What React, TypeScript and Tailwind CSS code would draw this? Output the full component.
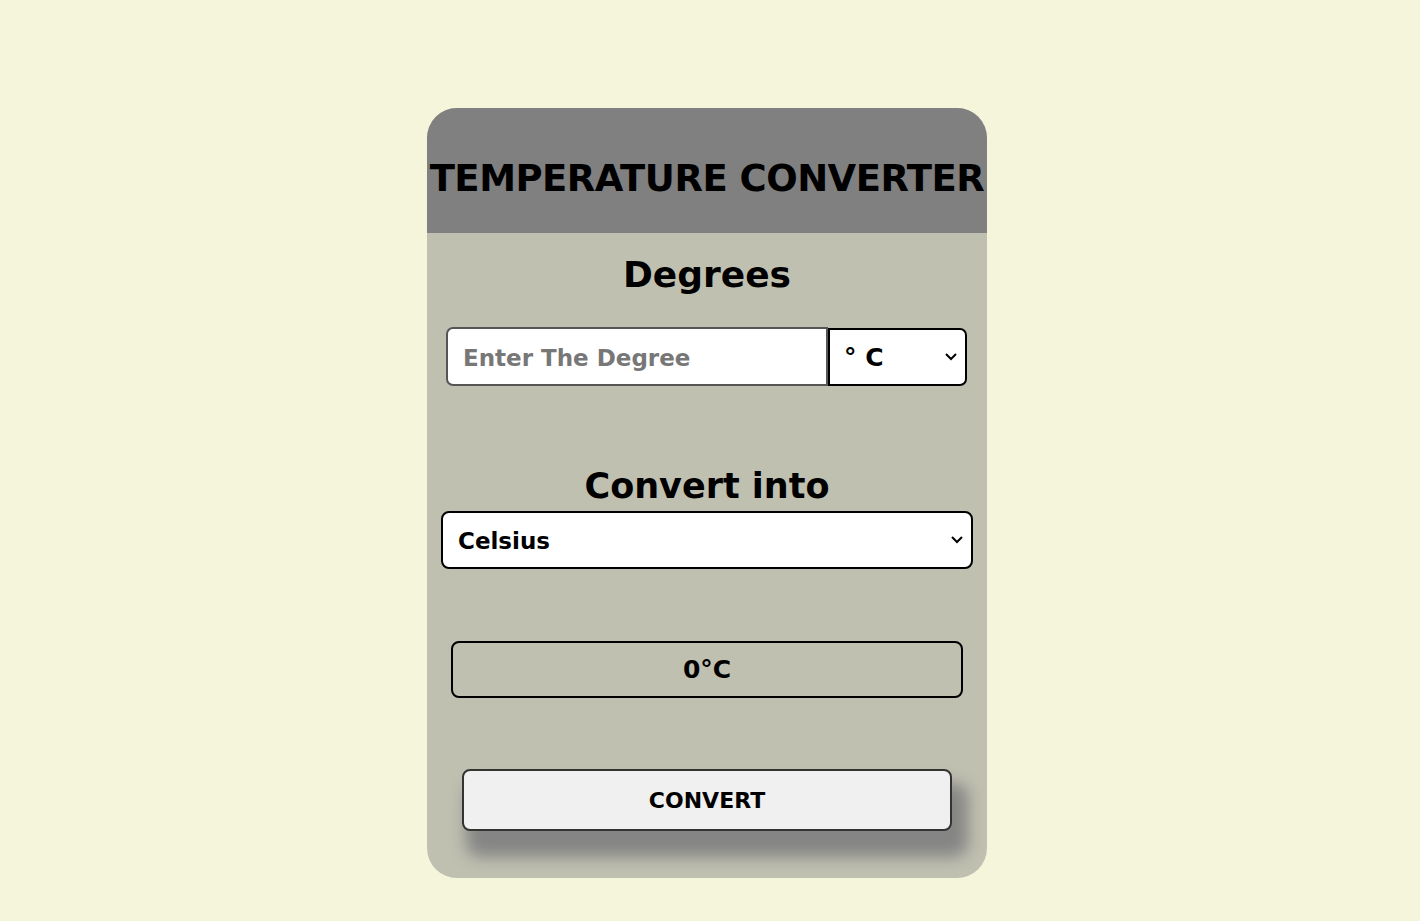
import React, { useState } from 'react';

const font = { fontFamily: '"DejaVu Sans", "Liberation Sans", sans-serif' };

const Chevron: React.FC = () => (
    <svg width="14" height="9" viewBox="0 0 14 9" fill="none" stroke="black" strokeWidth="2" className="pointer-events-none">
        <path d="M2 2l5 5 5-5" />
    </svg>
);

const App: React.FC = () => {
    const [degree, setDegree] = useState('');
    const [unit, setUnit] = useState('C');
    const [target, setTarget] = useState('Celsius');
    const [result, setResult] = useState('0°C');

    const handleConvert = () => {
        const v = parseFloat(degree) || 0;
        let c = v;
        if (unit === 'F') c = (v - 32) * 5 / 9;
        if (unit === 'K') c = v - 273.15;
        let out = c;
        let sym = '°C';
        if (target === 'Fahrenheit') { out = c * 9 / 5 + 32; sym = '°F'; }
        if (target === 'Kelvin') { out = c + 273.15; sym = 'K'; }
        setResult(`${Math.round(out * 100) / 100}${sym}`);
    };

    return (
        <div className="min-h-[921px] w-full bg-[#f5f5dc] flex justify-center pt-[108px] pr-[6px]" style={font}>
            <div className="w-[560px] h-[770px] rounded-[30px] bg-[#c0c0b1] overflow-hidden flex flex-col">
                <div className="h-[125px] bg-[#808080] flex items-center justify-center pt-[16px]">
                    <h1 className="text-[37px] font-bold text-black whitespace-nowrap tracking-[-0.5px]">TEMPERATURE CONVERTER</h1>
                </div>

                <h2 className="text-center text-[36px] font-bold text-black mt-[17px] leading-[50px]">Degrees</h2>

                <div className="flex mx-[19px] mt-[27px]">
                    <input
                        type="text"
                        value={degree}
                        onChange={e => setDegree(e.target.value)}
                        placeholder="Enter The Degree"
                        className="w-[382px] h-[59px] bg-white border-2 border-[#555] rounded-l-[7px] px-[15px] pt-[2px] text-[23px] font-bold text-black placeholder:text-[#777] outline-none"
                    />
                    <div className="relative w-[139px] h-[58px] mt-[1px]">
                        <select
                            value={unit}
                            onChange={e => setUnit(e.target.value)}
                            className="appearance-none w-full h-full bg-white border-2 border-black rounded-r-[7px] pl-[14px] pt-[2px] text-[25px] font-bold text-black outline-none"
                        >
                            <option value="C">° C</option>
                            <option value="F">° F</option>
                            <option value="K">K</option>
                        </select>
                        <span className="absolute right-[9px] top-[24px]"><Chevron /></span>
                    </div>
                </div>

                <h2 className="text-center text-[35px] font-bold text-black mt-[75px] leading-[50px]">Convert into</h2>

                <div className="relative mx-[14px] h-[58px]">
                    <select
                        value={target}
                        onChange={e => setTarget(e.target.value)}
                        className="appearance-none w-full h-full bg-white border-2 border-black rounded-[8px] pl-[15px] pt-[3px] text-[23px] font-bold text-black outline-none"
                    >
                        <option>Celsius</option>
                        <option>Fahrenheit</option>
                        <option>Kelvin</option>
                    </select>
                    <span className="absolute right-[9px] top-[24px]"><Chevron /></span>
                </div>

                <div className="mx-[24px] mt-[72px] h-[57px] border-2 border-black rounded-[8px] flex items-center justify-center text-[25px] font-bold text-black">
                    {result}
                </div>

                <button
                    onClick={handleConvert}
                    className="mx-[35px] mt-[71px] h-[62px] bg-[#f0f0f0] border-2 border-[#333] rounded-[8px] text-[22px] font-bold text-black shadow-[10px_20px_16px_6px_#858585]"
                >
                    CONVERT
                </button>
            </div>
        </div>
    );
};

export default App;
